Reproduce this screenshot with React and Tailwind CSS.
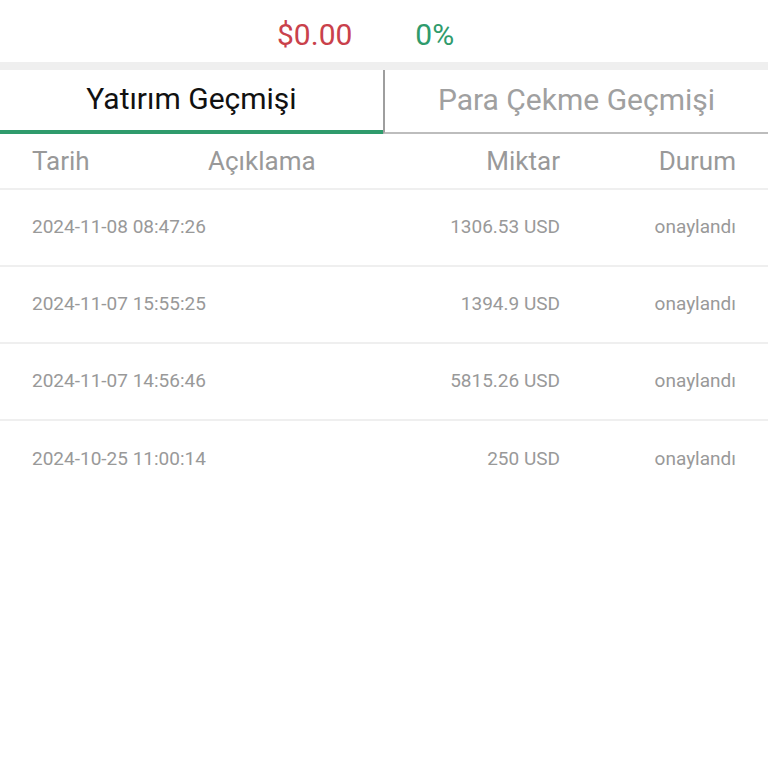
import React, { useState } from 'react';

const rows = [
  { date: '2024-11-08 08:47:26', amount: '1306.53 USD', status: 'onaylandı' },
  { date: '2024-11-07 15:55:25', amount: '1394.9 USD', status: 'onaylandı' },
  { date: '2024-11-07 14:56:46', amount: '5815.26 USD', status: 'onaylandı' },
  { date: '2024-10-25 11:00:14', amount: '250 USD', status: 'onaylandı' },
];

export default function App() {
  const [tab, setTab] = useState(0);

  return (
    <div className="w-[768px] h-[768px] bg-white font-['Roboto',sans-serif] overflow-hidden">
      {/* balance summary */}
      <div className="h-[62px] flex items-center pt-[6px] pl-[277px] gap-[63px] text-[30px]">
        <span className="text-[#c9414b]">$0.00</span>
        <span className="text-[#2f9b6c]">0%</span>
      </div>
      <div className="h-[8px] bg-[#efefef]" />

      {/* tabs */}
      <div className="flex h-[64px]">
        <button
          onClick={() => setTab(0)}
          className={`w-[383px] flex items-center justify-center pb-[4px] text-[30px] border-b-4 ${
            tab === 0 ? 'text-[#111] border-[#2f9b6c]' : 'text-[#999] border-[#bdbdbd]'
          }`}
        >
          Yatırım Geçmişi
        </button>
        <button
          onClick={() => setTab(1)}
          className={`flex-1 flex items-center justify-center pb-[4px] text-[30px] border-l-2 border-l-[#9e9e9e] border-b-2 ${
            tab === 1 ? 'text-[#111] border-b-[#2f9b6c]' : 'text-[#a0a0a0] border-b-[#bdbdbd]'
          }`}
        >
          Para Çekme Geçmişi
        </button>
      </div>

      {/* table header */}
      <div className="h-[56px] flex items-center px-8 text-[26px] text-[#999] border-b-2 border-[#efefef]">
        <span className="w-[176px]">Tarih</span>
        <span className="w-[176px]">Açıklama</span>
        <span className="w-[176px] text-right">Miktar</span>
        <span className="flex-1 text-right">Durum</span>
      </div>

      {/* rows */}
      {rows.map((r, i) => (
        <div
          key={i}
          className={`h-[77px] flex items-center px-8 text-[19px] text-[#999] ${
            i < rows.length - 1 ? 'border-b-2 border-[#efefef]' : ''
          }`}
        >
          <span className="w-[352px]">{r.date}</span>
          <span className="w-[176px] text-right">{r.amount}</span>
          <span className="flex-1 text-right">{r.status}</span>
        </div>
      ))}
    </div>
  );
}
